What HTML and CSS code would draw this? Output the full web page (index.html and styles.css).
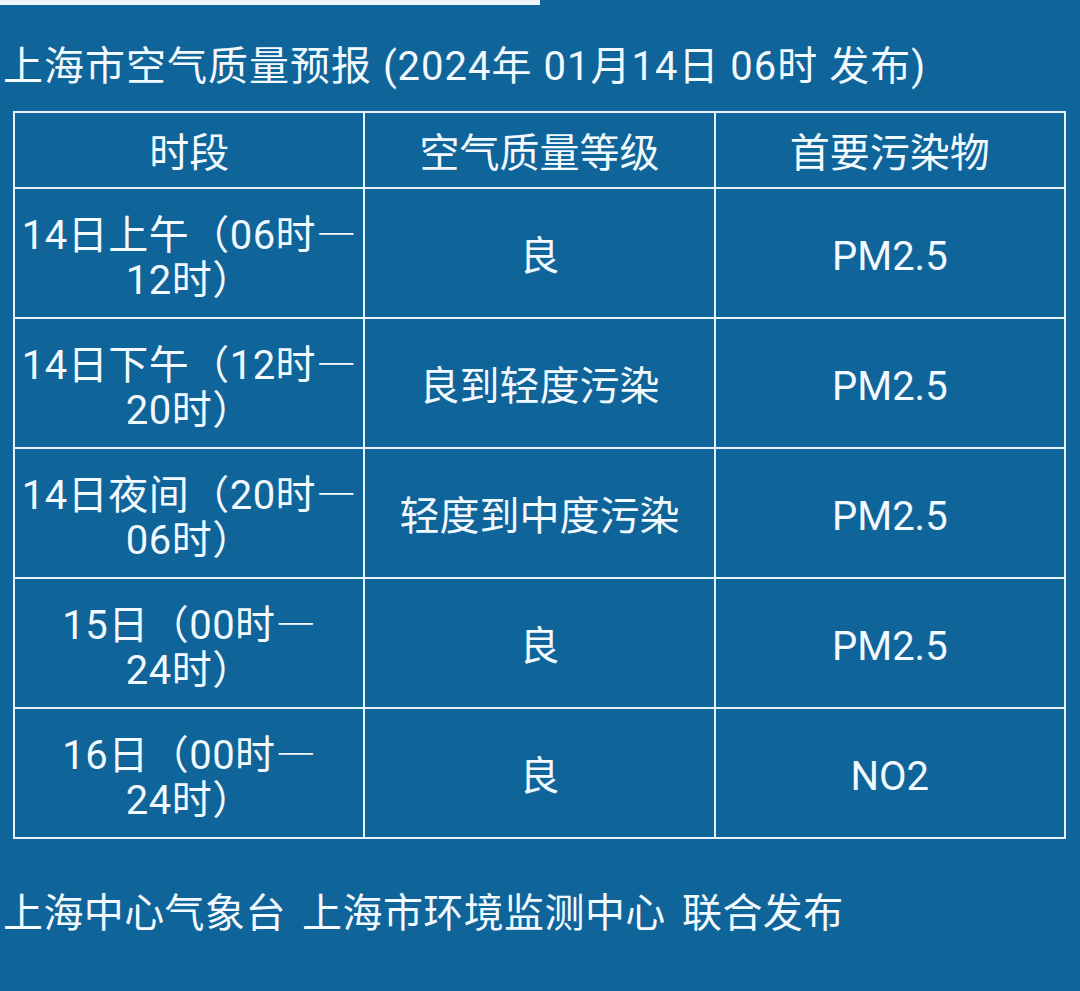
FILE: index.html
```html
<!DOCTYPE html>
<html lang="zh-CN">
<head>
<meta charset="utf-8">
<title>上海市空气质量预报</title>
<link rel="stylesheet" href="styles.css">
</head>
<body>
<div class="topline"></div>
<h1 class="title">上海市空气质量预报 (2024年 01月14日 06时 发布)</h1>
<table class="aqi">
  <thead>
    <tr><th>时段</th><th>空气质量等级</th><th>首要污染物</th></tr>
  </thead>
  <tbody>
    <tr><td>14日上午（06时<span class="dash">—</span><br>12时）</td><td>良</td><td>PM2.5</td></tr>
    <tr><td>14日下午（12时<span class="dash">—</span><br>20时）</td><td>良到轻度污染</td><td>PM2.5</td></tr>
    <tr><td>14日夜间（20时<span class="dash">—</span><br>06时）</td><td>轻度到中度污染</td><td>PM2.5</td></tr>
    <tr><td>15日（00时<span class="dash">—</span><br>24时）</td><td>良</td><td>PM2.5</td></tr>
    <tr><td>16日（00时<span class="dash">—</span><br>24时）</td><td>良</td><td>NO2</td></tr>
  </tbody>
</table>
<p class="footer">上海中心气象台 上海市环境监测中心 联合发布</p>
</body>
</html>
```
FILE: styles.css
```css
html, body {
  margin: 0;
  padding: 0;
}
body {
  background: #0f6499;
  color: #f2f9ff;
  font-family: Roboto, "Noto Sans CJK SC", "Noto Sans", sans-serif;
  width: 1080px;
  height: 991px;
  overflow: hidden;
}
.topline {
  width: 540px;
  height: 5px;
  background: #eef6fb;
}
.title {
  margin: 38px 0 0 3px;
  font-size: 40px;
  font-weight: 400;
  line-height: 48px;
  letter-spacing: 1px;
  white-space: nowrap;
}
.aqi {
  margin: 20px 0 0 13px;
  width: 1053px;
  border-collapse: collapse;
  table-layout: fixed;
}
.aqi th, .aqi td {
  border: 2px solid #e6f3fc;
  text-align: center;
  vertical-align: middle;
  font-size: 40px;
  font-weight: 400;
  line-height: 45px;
  padding: 6px 0 0;
}
.aqi th {
  height: 68px;
}
.aqi td {
  height: 122px;
}
.aqi tbody td:first-child {
  letter-spacing: 0.5px;
}
.dash {
  font-family: "Noto Sans CJK SC", sans-serif;
}
.footer {
  margin: 51px 0 0 3px;
  font-size: 40px;
  line-height: 48px;
  white-space: nowrap;
  word-spacing: 6px;
  letter-spacing: 0.4px;
}
```
